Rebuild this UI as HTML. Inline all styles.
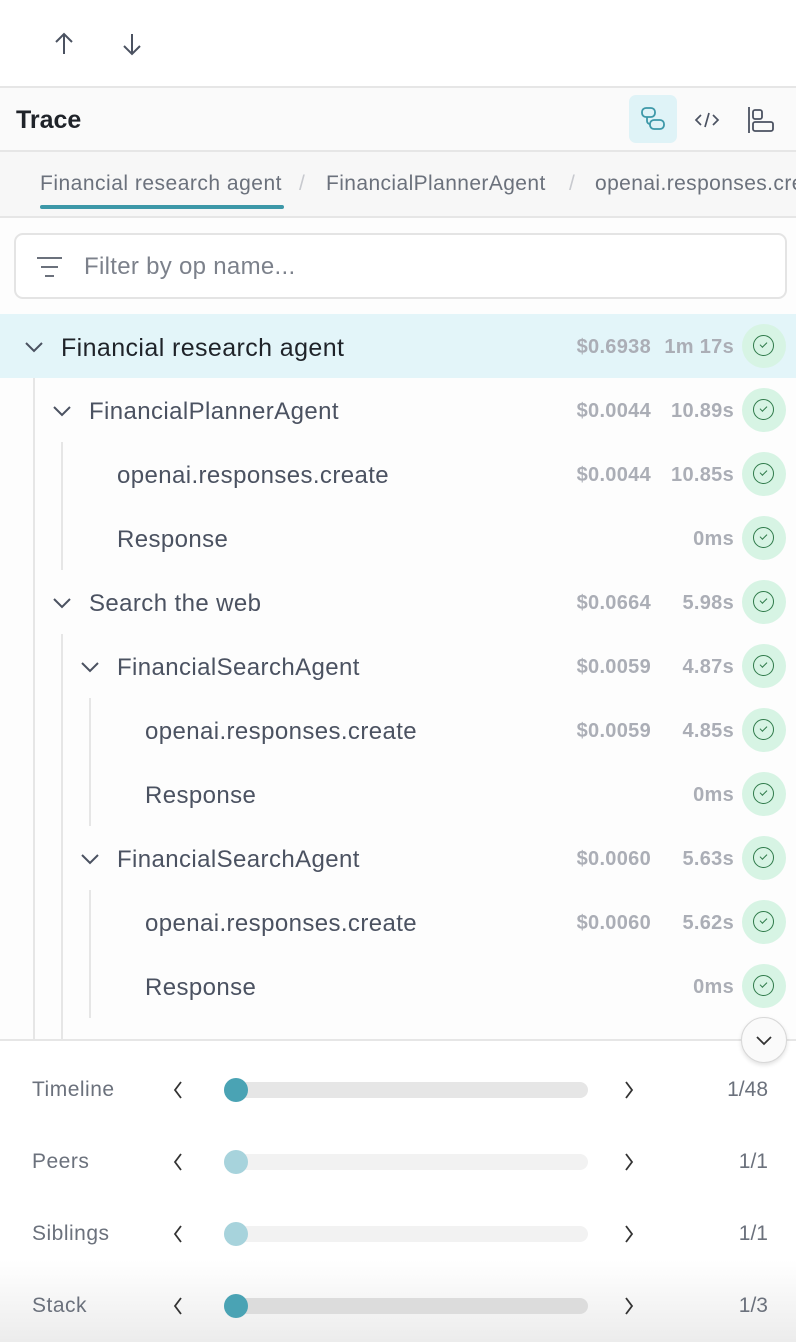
<!DOCTYPE html>
<html><head><style>
*{margin:0;padding:0;box-sizing:border-box}
body{width:796px;height:1342px;overflow:hidden;background:#fff;font-family:"Liberation Sans",sans-serif;position:relative;color:#4b5261}
.a{position:absolute}
.row{position:absolute;left:0;width:796px;height:64px}
.row .t{position:absolute;top:2px;line-height:64px;font-size:24px;color:#4b5261;white-space:nowrap;letter-spacing:0.4px}
.row .c{position:absolute;right:145px;top:1px;line-height:64px;font-size:20px;color:#abaeb6;font-weight:bold;letter-spacing:0.3px}
.row .d{position:absolute;right:62px;top:1px;line-height:64px;font-size:20px;color:#abaeb6;font-weight:bold;letter-spacing:0.3px}
.row .s{position:absolute;left:742px;top:10px;width:44px;height:44px;border-radius:50%;background:#d7f4e4}
.row .s:after{content:"";position:absolute;left:11px;top:11px;width:19px;height:19px;border:1.6px solid #2f7a4a;border-radius:50%}
.row .s i{position:absolute;left:18px;top:18px;width:7px;height:4px;border-left:1.6px solid #2f7a4a;border-bottom:1.6px solid #2f7a4a;transform:rotate(-45deg)}
.chev{position:absolute;top:25px}
.vl{position:absolute;width:2px;background:#e6e6e6}
.lab{position:absolute;left:32px;font-size:21px;color:#6b717c;letter-spacing:0.5px}
.lt,.rt{position:absolute}
.tr{position:absolute;left:224px;width:364px;height:16px;border-radius:8px}
.kn{position:absolute;left:224px;width:24px;height:24px;border-radius:50%}
.num{position:absolute;right:28px;font-size:21px;color:#6b717c}
</style></head><body>
<svg class="a" style="left:50px;top:30px" width="28" height="28" viewBox="0 0 28 28"><path d="M14 24V4M6 12L14 4L22 12" fill="none" stroke="#4b5261" stroke-width="2"/></svg>
<svg class="a" style="left:118px;top:30px" width="28" height="28" viewBox="0 0 28 28"><path d="M14 4V24M6 16L14 24L22 16" fill="none" stroke="#4b5261" stroke-width="2"/></svg>
<div class="a" style="left:0;top:86px;width:796px;height:2px;background:#e6e6e6"></div>
<div class="a" style="left:0;top:88px;width:796px;height:62px;background:#fafafa"></div>
<div class="a" style="left:16px;top:106px;font-size:25px;font-weight:bold;color:#1f2329">Trace</div>
<div class="a" style="left:629px;top:95px;width:48px;height:48px;border-radius:7px;background:#dff3f7"></div>
<svg class="a" style="left:639px;top:105px" width="28" height="28" viewBox="0 0 28 28" fill="none" stroke="#3d98a8" stroke-width="1.8"><rect x="3" y="3" width="13" height="9" rx="4"/><rect x="11" y="15" width="14" height="9" rx="4"/><path d="M8 12v4a3 3 0 0 0 3 3"/></svg>
<svg class="a" style="left:693px;top:106px" width="28" height="28" viewBox="0 0 28 28" fill="none" stroke="#4b5261" stroke-width="1.7"><path d="M8 9L3 14L8 19M20 9L25 14L20 19M16 7L12 21"/></svg>
<svg class="a" style="left:746px;top:105px" width="30" height="30" viewBox="0 0 30 30" fill="none" stroke="#4b5261" stroke-width="1.8"><path d="M3 2V28"/><rect x="7" y="5" width="9" height="9" rx="2"/><rect x="7" y="17" width="20" height="9" rx="2"/></svg>
<div class="a" style="left:0;top:150px;width:796px;height:2px;background:#e6e6e6"></div>
<div class="a" style="left:0;top:152px;width:796px;height:64px;background:#f7f7f7"></div>
<div class="a" style="left:40px;top:172px;font-size:21px;color:#6b717c;white-space:nowrap;letter-spacing:0.5px">Financial research agent</div>
<div class="a" style="left:40px;top:205px;width:244px;height:4px;border-radius:2px;background:#3d98a8"></div>
<div class="a" style="left:299px;top:172px;font-size:21px;color:#c8cacf">/</div>
<div class="a" style="left:326px;top:172px;font-size:21px;color:#6b717c;white-space:nowrap;letter-spacing:0.4px">FinancialPlannerAgent</div>
<div class="a" style="left:569px;top:172px;font-size:21px;color:#c8cacf">/</div>
<div class="a" style="left:595px;top:172px;font-size:21px;color:#6b717c;white-space:nowrap;letter-spacing:0.4px">openai.responses.create</div>
<div class="a" style="left:0;top:216px;width:796px;height:2px;background:#e6e6e6"></div>
<div class="a" style="left:0;top:218px;width:796px;height:822px;background:#fdfdfd"></div>
<div class="a" style="left:14px;top:233px;width:773px;height:66px;border:2px solid #e4e4e4;border-radius:9px;background:#fff"></div>
<svg class="a" style="left:36px;top:256px" width="28" height="24" viewBox="0 0 28 24" stroke="#6b717c" stroke-width="2"><path d="M1 2H26M5 11H22M9 20H18"/></svg>
<div class="a" style="left:84px;top:253px;font-size:24px;color:#7c818b;letter-spacing:0.3px">Filter by op name...</div>
<div class="a" style="left:0;top:314px;width:796px;height:64px;background:#e3f5f9"></div>
<div class="vl" style="left:33px;top:378px;height:662px"></div>
<div class="vl" style="left:61px;top:442px;height:128px"></div>
<div class="vl" style="left:61px;top:634px;height:406px"></div>
<div class="vl" style="left:89px;top:698px;height:128px"></div>
<div class="vl" style="left:89px;top:890px;height:128px"></div>

<svg width="0" height="0" style="position:absolute"><defs><path id="cv" d="M2 2L10 10L18 2" fill="none" stroke="#4b5261" stroke-width="2"/></defs></svg>
<div class="row" style="top:314px"><svg class="chev" style="left:24px;top:27px" width="20" height="12"><use href="#cv"/></svg><div class="t" style="left:61px;font-size:25px;color:#1f2329">Financial research agent</div><div class="c">$0.6938</div><div class="d">1m 17s</div><div class="s"><i></i></div></div>
<div class="row" style="top:378px"><svg class="chev" style="left:52px;top:27px" width="20" height="12"><use href="#cv"/></svg><div class="t" style="left:89px">FinancialPlannerAgent</div><div class="c">$0.0044</div><div class="d">10.89s</div><div class="s"><i></i></div></div>
<div class="row" style="top:442px"><div class="t" style="left:117px">openai.responses.create</div><div class="c">$0.0044</div><div class="d">10.85s</div><div class="s"><i></i></div></div>
<div class="row" style="top:506px"><div class="t" style="left:117px">Response</div><div class="d">0ms</div><div class="s"><i></i></div></div>
<div class="row" style="top:570px"><svg class="chev" style="left:52px;top:27px" width="20" height="12"><use href="#cv"/></svg><div class="t" style="left:89px">Search the web</div><div class="c">$0.0664</div><div class="d">5.98s</div><div class="s"><i></i></div></div>
<div class="row" style="top:634px"><svg class="chev" style="left:80px;top:27px" width="20" height="12"><use href="#cv"/></svg><div class="t" style="left:117px">FinancialSearchAgent</div><div class="c">$0.0059</div><div class="d">4.87s</div><div class="s"><i></i></div></div>
<div class="row" style="top:698px"><div class="t" style="left:145px">openai.responses.create</div><div class="c">$0.0059</div><div class="d">4.85s</div><div class="s"><i></i></div></div>
<div class="row" style="top:762px"><div class="t" style="left:145px">Response</div><div class="d">0ms</div><div class="s"><i></i></div></div>
<div class="row" style="top:826px"><svg class="chev" style="left:80px;top:27px" width="20" height="12"><use href="#cv"/></svg><div class="t" style="left:117px">FinancialSearchAgent</div><div class="c">$0.0060</div><div class="d">5.63s</div><div class="s"><i></i></div></div>
<div class="row" style="top:890px"><div class="t" style="left:145px">openai.responses.create</div><div class="c">$0.0060</div><div class="d">5.62s</div><div class="s"><i></i></div></div>
<div class="row" style="top:954px"><div class="t" style="left:145px">Response</div><div class="d">0ms</div><div class="s"><i></i></div></div>

<div class="a" style="left:0;top:1040px;width:796px;height:302px;background:linear-gradient(#fff 0,#fff 220px,#ececec 302px)"></div>
<div class="a" style="left:0;top:1039px;width:796px;height:2px;background:#e6e6e6"></div>
<div class="a" style="left:741px;top:1017px;width:46px;height:46px;border-radius:50%;background:#fafafa;border:1.5px solid #d8d8d8;box-shadow:0 2px 4px rgba(0,0,0,.12)"></div>
<svg class="a" style="left:755px;top:1035px" width="18" height="11"><path d="M2 2L9 9L16 2" fill="none" stroke="#333" stroke-width="1.8"/></svg>

<svg width="0" height="0" style="position:absolute"><defs><path id="lf" d="M9 2L3 10L9 18" fill="none" stroke="#333" stroke-width="1.8"/><path id="rg" d="M3 2L9 10L3 18" fill="none" stroke="#333" stroke-width="1.8"/></defs></svg>
<div class="lab" style="top:1078px">Timeline</div><svg class="lt" style="left:172px;top:1080px" width="12" height="20"><use href="#lf"/></svg><div class="tr" style="top:1082px;background:#e6e6e6"></div><div class="kn" style="top:1078px;background:#4aa3b4"></div><svg class="rt" style="left:623px;top:1080px" width="12" height="20"><use href="#rg"/></svg><div class="num" style="top:1078px">1/48</div>
<div class="lab" style="top:1150px">Peers</div><svg class="lt" style="left:172px;top:1152px" width="12" height="20"><use href="#lf"/></svg><div class="tr" style="top:1154px;background:#f2f2f2"></div><div class="kn" style="top:1150px;background:#a7d3dc"></div><svg class="rt" style="left:623px;top:1152px" width="12" height="20"><use href="#rg"/></svg><div class="num" style="top:1150px">1/1</div>
<div class="lab" style="top:1222px">Siblings</div><svg class="lt" style="left:172px;top:1224px" width="12" height="20"><use href="#lf"/></svg><div class="tr" style="top:1226px;background:#f2f2f2"></div><div class="kn" style="top:1222px;background:#a7d3dc"></div><svg class="rt" style="left:623px;top:1224px" width="12" height="20"><use href="#rg"/></svg><div class="num" style="top:1222px">1/1</div>
<div class="lab" style="top:1294px">Stack</div><svg class="lt" style="left:172px;top:1296px" width="12" height="20"><use href="#lf"/></svg><div class="tr" style="top:1298px;background:#dcdcdc"></div><div class="kn" style="top:1294px;background:#4aa3b4"></div><svg class="rt" style="left:623px;top:1296px" width="12" height="20"><use href="#rg"/></svg><div class="num" style="top:1294px">1/3</div>
</body></html>
